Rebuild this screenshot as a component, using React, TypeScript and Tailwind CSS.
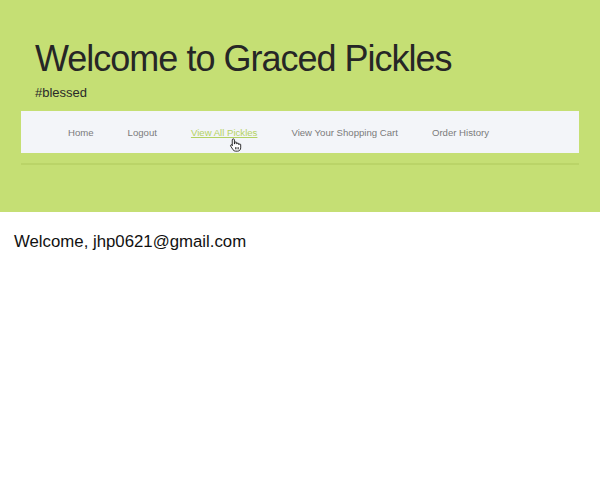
const links = ['Home', 'Logout', 'View All Pickles', 'View Your Shopping Cart', 'Order History'];

function HandCursor() {
  return (
    <svg width="13" height="16" viewBox="0 0 18 20" className="absolute left-[229px] top-[137px]">
      <path
        d="M6 1.5c.8 0 1.5.7 1.5 1.5v5.5h.5V7c0-.8.7-1.3 1.4-1.3s1.3.6 1.3 1.3v1.5h.3c0-.7.6-1.2 1.3-1.2s1.3.6 1.3 1.3v1h.2c0-.6.5-1.1 1.2-1.1s1.2.5 1.2 1.2V14c0 2.5-1.8 4.5-4.3 4.5H9c-1.5 0-2.6-.7-3.4-1.9L2.3 11.5c-.4-.6-.2-1.4.4-1.7.6-.4 1.3-.2 1.7.3L4.5 11V3c0-.8.7-1.5 1.5-1.5z"
        fill="#fff"
        stroke="#111"
        strokeWidth="1.2"
      />
      <path d="M9 13v3M11 13v3M13 13v3" stroke="#111" strokeWidth="1" />
    </svg>
  );
}

export default function App() {
  return (
    <div className="relative min-h-[497px] bg-white font-['Liberation_Sans',Arial,sans-serif]">
      <header className="h-[212px] bg-[#c5df74] px-[21px] pt-[41px]">
        <h1 className="pl-[14px] text-[36px] leading-none tracking-[-1px] text-[#262626]">Welcome to Graced Pickles</h1>
        <p className="mt-[9px] pl-[14px] text-[13px] leading-none text-[#2a2a2a]">#blessed</p>
        <nav className="mt-[12px] flex h-[42px] items-center gap-[34px] bg-[#f3f5f9] pl-[47px] pt-[2px]">
          {links.map((l) => (
            <a
              key={l}
              href="#"
              className={
                l === 'View All Pickles'
                  ? 'text-[9.6px] leading-none text-[#b3d262] underline'
                  : 'text-[9.6px] leading-none text-[#7b7b7b]'
              }
            >
              {l}
            </a>
          ))}
        </nav>
        <div className="mt-[10px] h-[2px] bg-[#bad468]" />
      </header>
      <main className="px-[14px] pt-[22px]">
        <p className="text-[16.8px] leading-none text-[#111]">Welcome, jhp0621@gmail.com</p>
      </main>
      <HandCursor />
    </div>
  );
}
